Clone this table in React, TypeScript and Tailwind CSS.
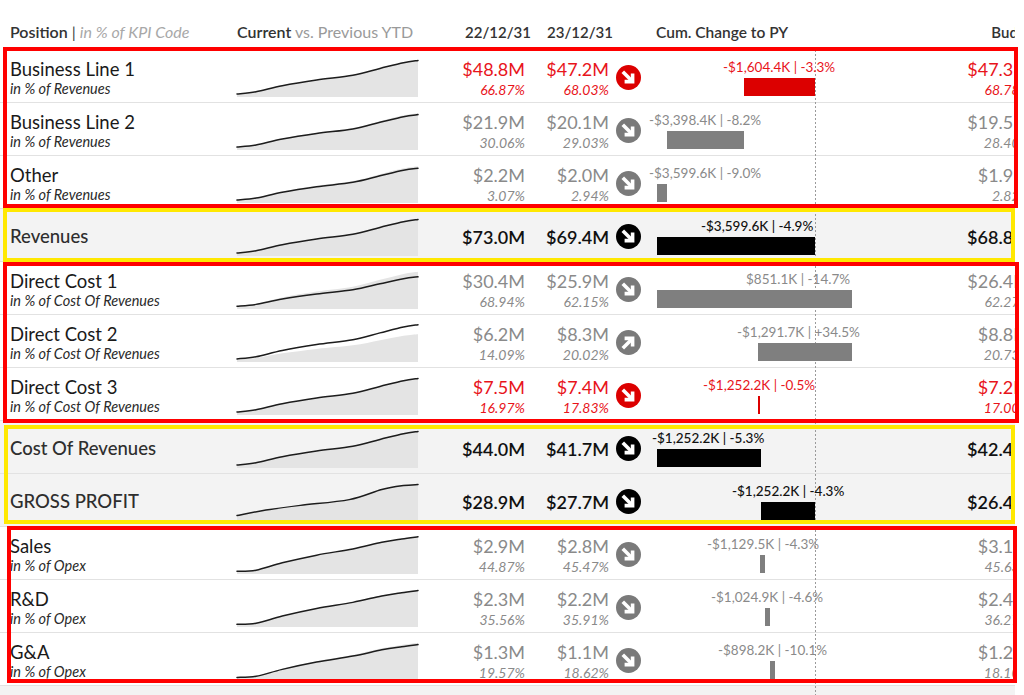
import React from "react";

type Tone = "red" | "gray" | "black";
type Pt = [number, number];
type Row = {
  name: string;
  sub?: string;
  bold?: boolean;
  tone: Tone;
  v1: string;
  p1?: string;
  v2: string;
  p2?: string;
  bud: string;
  pb?: string;
  up?: boolean;
  label: string;
  lx: number;
  bx: number;
  bw: number;
  line?: number;
  fill?: number;
  profile?: Pt[];
};

const BASE: Pt[] = [
  [0, 0.07],
  [0.105, 0.13],
  [0.25, 0.3],
  [0.44, 0.46],
  [0.64, 0.59],
  [0.79, 0.78],
  [0.92, 0.94],
  [1, 1],
];

const GP: Pt[] = [
  [0, 0.14],
  [0.16, 0.29],
  [0.35, 0.42],
  [0.62, 0.58],
  [0.8, 0.86],
  [0.92, 0.97],
  [1, 1],
];

const SALES: Pt[] = [
  [0, 0.06],
  [0.105, 0.09],
  [0.25, 0.29],
  [0.44, 0.5],
  [0.64, 0.67],
  [0.8, 0.85],
  [0.91, 0.94],
  [1, 1],
];

const ROWS: Row[] = [
  { name: "Business Line 1", sub: "in % of Revenues", tone: "red", v1: "$48.8M", p1: "66.87%", v2: "$47.2M", p2: "68.03%", bud: "$47.3M", pb: "68.78%", label: "-$1,604.4K | -3.3%", lx: 67, bx: 88, bw: 71, line: 1, fill: 1.01 },
  { name: "Business Line 2", sub: "in % of Revenues", tone: "gray", v1: "$21.9M", p1: "30.06%", v2: "$20.1M", p2: "29.03%", bud: "$19.5M", pb: "28.40%", label: "-$3,398.4K | -8.2%", lx: -7, bx: 11, bw: 77, line: 0.97, fill: 1.01 },
  { name: "Other", sub: "in % of Revenues", tone: "gray", v1: "$2.2M", p1: "3.07%", v2: "$2.0M", p2: "2.94%", bud: "$1.9M", pb: "2.82%", label: "-$3,599.6K | -9.0%", lx: -7, bx: 1, bw: 10, line: 0.95, fill: 1.01 },
  { name: "Revenues", bold: true, tone: "black", v1: "$73.0M", v2: "$69.4M", bud: "$68.8M", label: "-$3,599.6K | -4.9%", lx: 45, bx: 1, bw: 158, line: 1, fill: 1.03 },
  { name: "Direct Cost 1", sub: "in % of Cost Of Revenues", tone: "gray", v1: "$30.4M", p1: "68.94%", v2: "$25.9M", p2: "62.15%", bud: "$26.4M", pb: "62.27%", label: "$851.1K | -14.7%", lx: 90, bx: 1, bw: 195, line: 0.88, fill: 1.02 },
  { name: "Direct Cost 2", sub: "in % of Cost Of Revenues", tone: "gray", up: true, v1: "$6.2M", p1: "14.09%", v2: "$8.3M", p2: "20.02%", bud: "$8.8M", pb: "20.73%", label: "-$1,291.7K | +34.5%", lx: 81, bx: 102, bw: 94, line: 1.02, fill: 0.76 },
  { name: "Direct Cost 3", sub: "in % of Cost Of Revenues", tone: "red", v1: "$7.5M", p1: "16.97%", v2: "$7.4M", p2: "17.83%", bud: "$7.2M", pb: "17.00%", label: "-$1,252.2K | -0.5%", lx: 47, bx: 102, bw: 2, line: 1, fill: 1.01 },
  { name: "Cost Of Revenues", bold: true, tone: "black", v1: "$44.0M", v2: "$41.7M", bud: "$42.4M", label: "-$1,252.2K | -5.3%", lx: -4, bx: 1, bw: 104, line: 1, fill: 1.02 },
  { name: "GROSS PROFIT", bold: true, tone: "black", v1: "$28.9M", v2: "$27.7M", bud: "$26.4M", label: "-$1,252.2K | -4.3%", lx: 76, bx: 105, bw: 54, line: 1, fill: 1.02, profile: GP },
  { name: "Sales", sub: "in % of Opex", tone: "gray", v1: "$2.9M", p1: "44.87%", v2: "$2.8M", p2: "45.47%", bud: "$3.1M", pb: "45.63%", label: "-$1,129.5K | -4.3%", lx: 51, bx: 104, bw: 5, line: 1.02, fill: 1.02, profile: SALES },
  { name: "R&D", sub: "in % of Opex", tone: "gray", v1: "$2.3M", p1: "35.56%", v2: "$2.2M", p2: "35.91%", bud: "$2.4M", pb: "36.27%", label: "-$1,024.9K | -4.6%", lx: 55, bx: 109, bw: 5, line: 1, fill: 1.02, profile: SALES },
  { name: "G&A", sub: "in % of Opex", tone: "gray", v1: "$1.3M", p1: "19.57%", v2: "$1.1M", p2: "18.62%", bud: "$1.2M", pb: "18.10%", label: "-$898.2K | -10.1%", lx: 62, bx: 114, bw: 5, line: 0.97, fill: 1.02, profile: SALES },
  { name: "Opex", bold: true, tone: "black", v1: "$6.5M", v2: "$6.1M", bud: "$6.7M", label: "-$3,052.6K | -5.6%", lx: 40, bx: 100, bw: 14, line: 1, fill: 1.02 },
];

const TEXT: Record<Tone, string> = {
  red: "text-[#e8141b]",
  gray: "text-[#8a8a8a]",
  black: "text-[#111111]",
};
const BAR: Record<Tone, string> = {
  red: "bg-[#dc0000]",
  gray: "bg-[#7f7f7f]",
  black: "bg-[#000000]",
};
const CIRCLE: Record<Tone, string> = {
  red: "#dc0000",
  gray: "#7a7a7a",
  black: "#000000",
};

function smooth(pts: Pt[]): string {
  let d = `M${pts[0][0].toFixed(2)} ${pts[0][1].toFixed(2)}`;
  for (let i = 0; i < pts.length - 1; i++) {
    const p0 = pts[i - 1] || pts[i];
    const p1 = pts[i];
    const p2 = pts[i + 1];
    const p3 = pts[i + 2] || p2;
    const c1x = p1[0] + (p2[0] - p0[0]) / 6;
    const c1y = p1[1] + (p2[1] - p0[1]) / 6;
    const c2x = p2[0] - (p3[0] - p1[0]) / 6;
    const c2y = p2[1] - (p3[1] - p1[1]) / 6;
    d += ` C${c1x.toFixed(2)} ${c1y.toFixed(2)} ${c2x.toFixed(2)} ${c2y.toFixed(2)} ${p2[0].toFixed(2)} ${p2[1].toFixed(2)}`;
  }
  return d;
}

function Spark({ line = 1, fill = 1, profile = BASE }: { line?: number; fill?: number; profile?: Pt[] }) {
  const W = 181;
  const H = 37;
  const pts = (a: number): Pt[] => profile.map(([t, h]) => [t * W, H - h * a * (H - 1) - 0.5] as Pt);
  const fillD = `${smooth(pts(fill))} L${W} ${H} L0 ${H} Z`;
  return (
    <svg width={W} height={H} viewBox={`0 0 ${W} ${H}`} className="block overflow-visible">
      <path d={fillD} fill="#e4e4e4" />
      <path d={smooth(pts(line))} fill="none" stroke="#1c1c1c" strokeWidth="1.5" strokeLinejoin="round" strokeLinecap="round" />
    </svg>
  );
}

function Arrow({ color, up }: { color: string; up?: boolean }) {
  return (
    <svg width="25" height="25" viewBox="0 0 25 25" className="block">
      <circle cx="12.5" cy="12.5" r="12.5" fill={color} />
      <g stroke="#ffffff" strokeWidth="3.6" fill="none" strokeLinecap="butt" strokeLinejoin="miter">
        {up ? (
          <>
            <path d="M6.8 18.2 L16 9" />
            <path d="M8.6 8.4 H16.6 V16.4" />
          </>
        ) : (
          <>
            <path d="M6.8 6.8 L16 16" />
            <path d="M8.6 16.6 H16.6 V8.6" />
          </>
        )}
      </g>
    </svg>
  );
}

function RowView({ r }: { r: Row }) {
  const tc = TEXT[r.tone];
  return (
    <div className={`flex h-[53px] shrink-0 border-b border-[#e2e2e2] ${r.bold ? "bg-[#f3f3f3]" : "bg-white"}`}>
      <div className="w-[237px] shrink-0 pl-[10px]">
        {r.bold ? (
          <div className="pt-[16px] text-[18.5px] leading-[22px] font-medium text-[#2e2e2e] whitespace-nowrap">{r.name}</div>
        ) : (
          <div className="pt-[8px] whitespace-nowrap">
            <div className="text-[18.5px] leading-[22px] text-[#1a1a1a]">{r.name}</div>
            <div className="mt-[1px] text-[14.5px] leading-[16px] italic text-[#2a2a2a]">{r.sub}</div>
          </div>
        )}
      </div>
      <div className="w-[181px] shrink-0 pt-[10px]">
        <Spark line={r.line} fill={r.fill} profile={r.profile} />
      </div>
      {[
        { v: r.v1, p: r.p1, w: "w-[107px]" },
        { v: r.v2, p: r.p2, w: "w-[84px]" },
      ].map((c, i) => (
        <div key={i} className={`${c.w} shrink-0 text-right whitespace-nowrap ${tc}`}>
          {r.bold ? (
            <div className="pt-[17px] text-[18px] leading-[22px] font-semibold">{c.v}</div>
          ) : (
            <div className="pt-[8px]">
              <div className="text-[18px] leading-[22px]">{c.v}</div>
              <div className="mt-[2px] text-[14px] leading-[16px] italic">{c.p}</div>
            </div>
          )}
        </div>
      ))}
      <div className="flex w-[47px] shrink-0 items-center pl-[7px] pt-[2px]">
        <Arrow color={CIRCLE[r.tone]} up={r.up} />
      </div>
      <div className="relative w-[284px] shrink-0">
        <div
          className={`absolute top-[9px] z-10 whitespace-nowrap text-[13.5px] leading-[16px] ${tc} ${r.bold ? "font-medium" : ""}`}
          style={{ left: r.lx }}
        >
          {r.label}
        </div>
        <div className={`absolute top-[28px] z-10 h-[18px] ${BAR[r.tone]}`} style={{ left: r.bx, width: r.bw }} />
      </div>
      <div className={`w-[90px] shrink-0 text-right whitespace-nowrap ${tc}`}>
        {r.bold ? (
          <div className="pt-[17px] text-[18px] leading-[22px] font-semibold">{r.bud}</div>
        ) : (
          <div className="pt-[8px]">
            <div className="text-[18px] leading-[22px]">{r.bud}</div>
            <div className="mt-[2px] text-[14px] leading-[16px] italic">{r.pb}</div>
          </div>
        )}
      </div>
    </div>
  );
}

export default function App() {
  return (
    <div className="relative h-[695px] w-[1024px] overflow-hidden bg-white font-['Lato','Liberation_Sans',sans-serif]">
      <div className="relative h-full w-[1015px] overflow-hidden">
        <div className="flex h-[50px] items-center pt-[13px] text-[16px] leading-[20px] text-[#333333] whitespace-nowrap">
          <div className="w-[237px] shrink-0 pl-[10px]">
            <span className="font-semibold">Position</span>
            <span className="text-[#444444]"> | </span>
            <span className="italic text-[#a8a8a8]">in % of KPI Code</span>
          </div>
          <div className="w-[181px] shrink-0">
            <span className="font-semibold">Current</span>
            <span className="text-[#9a9a9a]"> vs. Previous YTD</span>
          </div>
          <div className="w-[113px] shrink-0 text-right text-[15px] font-semibold">22/12/31</div>
          <div className="w-[82px] shrink-0 text-right text-[15px] font-semibold">23/12/31</div>
          <div className="w-[43px] shrink-0" />
          <div className="w-[284px] shrink-0 text-[15.5px] font-semibold">Cum. Change to PY</div>
          <div className="w-[99px] shrink-0 text-right text-[15px] font-semibold">Budget</div>
        </div>
        <div className="flex flex-col">
          {ROWS.map((r) => (
            <RowView key={r.name} r={r} />
          ))}
        </div>
        <div className="absolute left-[815px] top-[50px] bottom-0 z-[5] w-px bg-[repeating-linear-gradient(to_bottom,#9a9a9a_0px,#9a9a9a_2px,transparent_2px,transparent_4px)]" />
      </div>

      <div className="pointer-events-none absolute left-[3px] top-[47px] z-20 h-[161px] w-[1015px] border-4 border-[#ff0000]" />
      <div className="pointer-events-none absolute left-[3px] top-[208px] z-20 h-[54px] w-[1012px] border-4 border-[#ffe800]" />
      <div className="pointer-events-none absolute left-[3px] top-[262px] z-20 h-[161px] w-[1016px] border-4 border-[#ff0000]" />
      <div className="pointer-events-none absolute left-[4px] top-[425px] z-20 h-[99px] w-[1011px] border-4 border-[#ffe800]" />
      <div className="pointer-events-none absolute left-[7px] top-[526px] z-20 h-[157px] w-[1010px] border-4 border-[#ff0000]" />
    </div>
  );
}
